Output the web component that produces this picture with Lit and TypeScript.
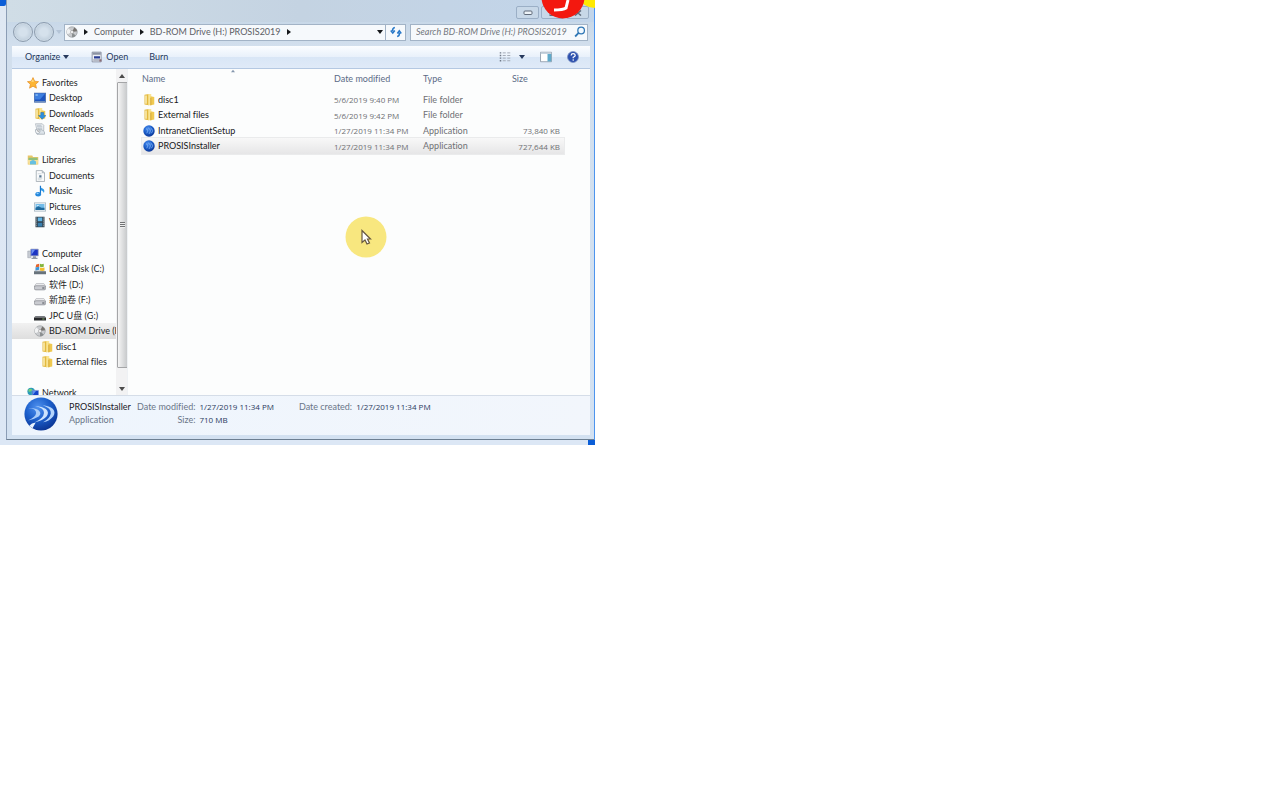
import { LitElement, html, css, svg, nothing } from "lit";
import { customElement, property, state } from "lit/decorators.js";

const folder = svg`<path d="M2 1l6-1v15l-6-1z" fill="#e3b93f"/><path d="M7 0h4v15H7z" fill="#f9e493"/><path d="M10 3l5 1v10l-5 1z" fill="#efc950"/><path d="M10 5h1v10h-1z" fill="#c99a2a"/><path d="M3 2h2v11H3z" fill="#fbefb9"/>`;
const drive = svg`<path d="M3 6h10l3 4H0z" fill="#e9eaec" stroke="#a3a5aa" stroke-width=".7"/><rect x=".5" y="9" width="15" height="5.5" rx="2" fill="#c9cbd0" stroke="#777b82" stroke-width=".8"/><path d="M11 12h3" stroke="#4b4f55" stroke-width="1.3"/>`;
const disc = svg`<circle cx="8" cy="8" r="7" fill="#c9cbce" stroke="#8f9397" stroke-width=".8"/><path d="M8 8L3 3a7 7 0 0 0-1 8z" fill="#f1f2f3"/><path d="M8 8l3-6a7 7 0 0 1 4 5z" fill="#77736f"/><path d="M8 8l5 5a7 7 0 0 1-5 2z" fill="#8b8f90"/><circle cx="8" cy="8" r="2" fill="#fff" stroke="#888" stroke-width=".7"/>`;
const ball = svg`<defs><radialGradient id="b" cx=".4" cy=".3" r=".75"><stop offset="0" stop-color="#4f91ee"/><stop offset=".5" stop-color="#1c5fcb"/><stop offset="1" stop-color="#0a3290"/></radialGradient></defs>`;

const icons: Record<string, unknown> = {
  star: svg`<path d="M8 .8l2.2 4.8 5.2.6-3.9 3.5 1.1 5.2L8 12.3l-4.6 2.6 1.1-5.2L.6 6.2l5.2-.6z" fill="#fdb634" stroke="#e48a1e" stroke-width=".9"/><path d="M8 3l1.3 3.4H5.5z" fill="#ffdf83"/>`,
  desktop: svg`<rect x=".5" y="1.5" width="15" height="12" fill="#1d55c0" stroke="#4c6fa8"/><path d="M1 2h14L8 10H1z" fill="#3d7fe0"/><path d="M1 12h14v2H1z" fill="#6f8fc0"/><path d="M2 3h3v2H2z" fill="#8fc0f5"/>`,
  downloads: svg`${folder}<path d="M9 6h4v4h3l-5 5-5-5h3z" fill="#2b8fe0" stroke="#1766b5" stroke-width=".6"/>`,
  recent: svg`<path d="M2 1h9l2 2v7H4z" fill="#edf0f3" stroke="#9ba4ac" stroke-width=".8"/><path d="M4 3h6M4 5h7M5 7h6" stroke="#a8b4bf"/><path d="M2 9h9l3 3v3H4z" fill="#dce3e9" stroke="#8f9aa5" stroke-width=".8"/><circle cx="5" cy="11" r="3" fill="#f7f9fa" stroke="#8e9ba6" stroke-width=".8"/><path d="M5 9v2h2" stroke="#555" stroke-width=".7" fill="none"/>`,
  libraries: svg`<path d="M1 2h6l1 2h7v10H1z" fill="#e9c667"/><path d="M2 5h12v4H2z" fill="#8fc07d"/><path d="M1 8h14l-1 6H2z" fill="#f5e09a"/><path d="M4 10q4-4 8 0v4H4z" fill="#66bfe0"/>`,
  documents: svg`<path d="M3 .8h8l3 3v11.5H3z" fill="#fafbfc" stroke="#8c979f" stroke-width=".9"/><path d="M11 .8v3h3" fill="#ccd4da" stroke="#8c979f" stroke-width=".7"/><path d="M5 5h5M5 11h6M5 13h5" stroke="#b8c3ca" stroke-width=".8"/><path d="M7 7h3v3H7z" fill="#5a7893"/>`,
  music: svg`<path d="M8 1q1 3 4 4 3 2 1 6 0-3-4-4v5" fill="#2e9ae8"/><path d="M8.6 1v11" stroke="#1976cb" stroke-width="1.6"/><ellipse cx="5.6" cy="12.2" rx="3.8" ry="3" fill="#2387dc"/><ellipse cx="4.8" cy="11.4" rx="1.5" ry="1" fill="#93d0fb"/>`,
  pictures: svg`<rect x=".5" y="2.5" width="15" height="11" fill="#f5f9fb" stroke="#9fb0bc"/><path d="M2 4h12v8H2z" fill="#72bbe8"/><path d="M2 9l4-2 4 2 4 0v3H2z" fill="#206a9d"/><path d="M3 5l4 1-2 1z" fill="#e4f6ff"/>`,
  videos: svg`<path d="M2 1h12v14H2z" fill="#32424e"/><path d="M5 2h6v5H5z" fill="#62b5e5"/><path d="M5 9h6v5H5z" fill="#397fae"/><path d="M3.4 2v12M12.6 2v12" stroke="#ccd5da" stroke-dasharray="1.3 1.3"/>`,
  computer: svg`<path d="M1 4h4v9H1z" fill="#c8cdd4" stroke="#8d949e" stroke-width=".6"/><path d="M5 1.5h10v9H5z" fill="#1c35c3" stroke="#a3aabc"/><path d="M6 2h5l-5 7z" fill="#6d91f1"/><path d="M8 11h4v2h2v1.5H6V13h2z" fill="#8f98a6"/>`,
  local: svg`<path d="M1 9h12l3 5H0z" fill="#d7d9dc"/><path d="M0 11h16v4H0z" fill="#68737c"/><path d="M3 2l4-1v4l-5 1z" fill="#e5642b"/><path d="M8 1q2 1 5 0v4q-3 1-5 0z" fill="#83b53c"/><path d="M2 6l5-1v4l-5 1z" fill="#3b96d9"/><path d="M8 6q2 1 6 0v4q-3 1-6 0z" fill="#f3bd2c"/>`,
  drive,
  usb: svg`<path d="M2 8h12l2 2H0z" fill="#777b80"/><path d="M0 10h16v4H0z" fill="#26282b"/><path d="M11 12h3" stroke="#9bd37c"/>`,
  disc,
  folder,
  network: svg`<circle cx="5.5" cy="6" r="5" fill="#2b9bb9"/><path d="M2 3q4-2 5 1-2 3-5 2z" fill="#74cf77"/><path d="M7 4.5h8.5v7.5H7z" fill="#1544c9" stroke="#9cafd8" stroke-width=".8"/><path d="M8 5.3h4l-4 5z" fill="#5b91f3"/><path d="M9 12h5v2H9z" fill="#8896aa"/>`,
  app: svg`${ball}<circle cx="8" cy="8" r="7.6" fill="url(#b)"/><path d="M4 5q4 1 1 6M7 4q5 2 1 8M10 4q5 3 1 7" fill="none" stroke="#91bdf9" stroke-width=".9"/>`,
  appLarge: svg`${ball}<circle cx="8" cy="8" r="7.8" fill="url(#b)"/><path d="M2 5.2q3.9.2 3.7 2.5Q5.4 9.6 1.9 11q3-.5 5-1.8 1.5-1.3.2-2.7Q5.5 5 2 5.2z" fill="#a9cdfa"/><path d="M5.2 4.3q4.4.8 4.2 3.2-.2 2.5-4.3 4.4 3.800-.6 5.600-2.800 1.300-1.900-.4-3.400-1.600-1.300-5.100-1.400z" fill="#cde3fd"/><path d="M8.800 3.900q4.100 1.400 3.800 3.900-.4 2.400-3.600 4.100 3.100-.7 4.800-2.900 1.200-2-.3-3.500-1.500-1.300-4.700-1.600z" fill="#b4d4fc"/><path d="M2.500 13.500q1-1.300 3-1.500L4 14.700z" fill="#e9f4ff"/>`,
  open: svg`<path d="M1.500 1.500h12v13h-12z" fill="#eceff5" stroke="#777f91"/><path d="M2 2h11v3H2z" fill="#8b92a2"/><path d="M4 7h8v3H4z" fill="#283c93"/><path d="M3 12h8" stroke="#8b92a2" stroke-width="1.5"/><path d="M11 11h3v3h-3z" fill="#8a6b74"/>`,
  refresh: svg`<path d="M6.500 2Q3 2.500 3.500 7M1 6l2.700 3.500L6.400 6M9.500 14q3.500-.5 3-5M9.800 10l2.600-3.500L15 10" fill="none" stroke="#2878c8" stroke-width="2"/>`,
  search: svg`<circle cx="9.500" cy="6" r="4.400" fill="#f2f9ff" stroke="#2f77b5" stroke-width="1.700"/><path d="M6.200 9.300L1.500 14" stroke="#2f77b5" stroke-width="2.400"/>`,
  views: svg`<path d="M1 2.500h2M1 6h2M1 9.500h2M1 13h2" stroke="#6f7988" stroke-width="1.800"/><path d="M5 2.500h4M5 6h4M5 9.500h4M5 13h4M11 2.500h4M11 6h4M11 9.500h4M11 13h4" stroke="#a3abb7" stroke-width="1.300"/>`,
  preview: svg`<path d="M.7 1.700h14.600v12.600H.7z" fill="#fff" stroke="#7f8d9e"/><path d="M1 2h14v2H1z" fill="#c6d3df"/><path d="M10 4h5v10h-5z" fill="#5faacb"/>`,
  help: svg`<circle cx="8" cy="8" r="7.300" fill="#2c50ae" stroke="#7a8fc2"/><path d="M5.500 6q.2-2.500 2.700-2.500T11 5.800Q11 7.300 8.300 8.300v1.500" fill="none" stroke="#fff" stroke-width="1.700"/><circle cx="8.300" cy="12" r="1.100" fill="#fff"/>`,
};

const icon = (name: string, cls = "icon") =>
  html`<svg class=${cls} viewBox="0 0 16 16" aria-hidden="true">${icons[name]}</svg>`;

const caret = (dir: "down" | "right" | "up", cls = "caret") => {
  const d = { down: "M0 1h6L3 5z", right: "M1 0l4 3-4 3z", up: "M0 5h6L3 1z" }[dir];
  return html`<svg class=${cls} viewBox="0 0 6 6" aria-hidden="true"><path d=${d} fill="currentColor" /></svg>`;
};

interface Place { label?: string; icon?: string; level?: number }

const places: Place[] = [
  { label: "Favorites", icon: "star", level: 0 },
  { label: "Desktop", icon: "desktop", level: 1 },
  { label: "Downloads", icon: "downloads", level: 1 },
  { label: "Recent Places", icon: "recent", level: 1 },
  {},
  { label: "Libraries", icon: "libraries", level: 0 },
  { label: "Documents", icon: "documents", level: 1 },
  { label: "Music", icon: "music", level: 1 },
  { label: "Pictures", icon: "pictures", level: 1 },
  { label: "Videos", icon: "videos", level: 1 },
  {},
  { label: "Computer", icon: "computer", level: 0 },
  { label: "Local Disk (C:)", icon: "local", level: 1 },
  { label: "软件 (D:)", icon: "drive", level: 1 },
  { label: "新加卷 (F:)", icon: "drive", level: 1 },
  { label: "JPC U盘 (G:)", icon: "usb", level: 1 },
  { label: "BD-ROM Drive (H:) PROSIS2019", icon: "disc", level: 1 },
  { label: "disc1", icon: "folder", level: 2 },
  { label: "External files", icon: "folder", level: 2 },
  {},
  { label: "Network", icon: "network", level: 0 },
];

const files = [
  { name: "disc1", icon: "folder", date: "5/6/2019 9:40 PM", type: "File folder", size: "" },
  { name: "External files", icon: "folder", date: "5/6/2019 9:42 PM", type: "File folder", size: "" },
  { name: "IntranetClientSetup", icon: "app", date: "1/27/2019 11:34 PM", type: "Application", size: "73,840 KB" },
  { name: "PROSISInstaller", icon: "app", date: "1/27/2019 11:34 PM", type: "Application", size: "727,644 KB" },
];

const shared = css`
  :host { display: block; font-variant-ligatures: none; }
  * { box-sizing: border-box; }
  button { font: inherit; color: inherit; background: none; border: 0; padding: 0; margin: 0; white-space: nowrap; }
  .icon { width: 12px; height: 12px; flex: none; display: block; }
  .caret { width: 6px; height: 6px; flex: none; display: block; }
`;

@customElement("explorer-toolbar")
class ExplorerToolbar extends LitElement {
  static styles = [shared, css`
    .bar {
      display: flex; align-items: center; height: 23px; padding: 0 11px 0 13px; color: #26395c;
      background: linear-gradient(#fbfdff, #e9f1fb 48%, #d9e6f6 52%, #dfeaf8);
      border-bottom: 1px solid #b4c8e2;
    }
    button { display: flex; align-items: center; gap: 3px; }
    .open { margin-left: 22px; }
    .burn { margin-left: 21px; }
    .end { display: flex; align-items: center; gap: 15px; margin-left: auto; }
    .views { gap: 8px; }
  `];

  render() {
    return html`<div class="bar" role="toolbar" aria-label="Commands">
      <button>Organize ${caret("down")}</button>
      <button class="open">${icon("open")}Open</button>
      <button class="burn">Burn</button>
      <div class="end">
        <button class="views" aria-label="Change view">${icon("views")}${caret("down")}</button>
        <button aria-label="Preview pane">${icon("preview")}</button>
        <button aria-label="Help">${icon("help")}</button>
      </div>
    </div>`;
  }
}

@customElement("places-pane")
class PlacesPane extends LitElement {
  @property() current = "";

  static styles = [shared, css`
    :host { display: flex; min-height: 0; overflow: hidden; }
    .list {
      flex: 1; min-width: 0; height: 326px; margin: 6px 0 0; padding: 0; list-style: none;
      display: grid; grid-auto-rows: 1fr; color: #1d1d1f;
    }
    li { display: flex; overflow: hidden; }
    .place { display: flex; align-items: center; gap: 3px; flex: 1; padding-left: 15px; text-align: left; }
    .level1 { padding-left: 22px; }
    .level2 { padding-left: 29px; }
    .current { background: linear-gradient(#f1f1f1, #dedede); }
    .track { width: 12px; flex: none; display: flex; flex-direction: column; align-items: center; padding: 4px 0 3px; background: #f2f2f3; color: #4b4b4b; }
    .thumb {
      width: 11px; height: 286px; margin: 3px 0 auto; border: 1px solid #a4a5a7; border-radius: 1px;
      background: linear-gradient(90deg, #f5f5f5, #dedfe0 50%, #c7c9cb);
      display: flex; align-items: center; justify-content: center;
    }
    .grip { width: 5px; height: 6px; background: repeating-linear-gradient(#707274 0 1px, #eee 1px 2px); }
  `];

  render() {
    return html`<ul class="list">
        ${places.map((p) => p.label
          ? html`<li class=${p.icon === this.current ? "current" : ""}>
              <button class="place level${p.level}">${icon(p.icon!)}<span>${p.label}</span></button>
            </li>`
          : html`<li aria-hidden="true"></li>`)}
      </ul>
      <div class="track" aria-hidden="true">
        ${caret("up")}
        <div class="thumb"><div class="grip"></div></div>
        ${caret("down")}
      </div>`;
  }
}

@customElement("file-list")
class FileList extends LitElement {
  @state() private selected = "PROSISInstaller";

  static styles = [shared, css`
    :host { padding: 0 26px 0 14px; position: relative; }
    table { width: 100%; border-collapse: collapse; table-layout: fixed; text-align: left; }
    th, td { padding: 0; font-weight: normal; white-space: nowrap; }
    th { height: 23px; padding-bottom: 4px; color: #5b6b86; }
    th:last-child { padding-left: 4px; }
    td { height: 15px; color: #6f7074; }
    tr:nth-child(even) td { height: 16px; }
    .date { width: 89px; }
    .type { width: 85px; }
    .size { width: 56px; }
    .num { font: 8px "Open Sans", sans-serif; }
    .right { text-align: right; padding-right: 4px; }
    .name { display: flex; align-items: center; gap: 3px; padding-left: 1px; color: #17181a; }
    .selected { background: linear-gradient(#f8f8f8, #e6e6e7); box-shadow: 0 0 0 1px #eaebec; }
    .sort { position: absolute; left: 102px; top: 0; width: 6px; height: 4px; color: #8496ad; }
  `];

  render() {
    return html`${caret("up", "sort")}
      <table>
        <thead>
          <tr>
            <th scope="col">Name</th>
            <th scope="col" class="date">Date modified</th>
            <th scope="col" class="type">Type</th>
            <th scope="col" class="size">Size</th>
          </tr>
        </thead>
        <tbody>
          ${files.map((f) => html`<tr class=${f.name === this.selected ? "selected" : ""} @click=${() => (this.selected = f.name)}>
            <td><button class="name">${icon(f.icon)}${f.name}</button></td>
            <td class="num">${f.date}</td>
            <td>${f.type}</td>
            <td class="num right">${f.size || nothing}</td>
          </tr>`)}
        </tbody>
      </table>`;
  }
}

@customElement("details-pane")
class DetailsPane extends LitElement {
  static styles = [shared, css`
    .pane {
      display: flex; gap: 11px; height: 40px; padding: 1px 12px; color: #2a3a5d;
      background: linear-gradient(90deg, #eef5fd, #f2f6fc); border-top: 1px solid #d5dde8;
    }
    .large { width: 34px; height: 34px; flex: none; }
    .facts { display: grid; grid-template-columns: 64px auto auto auto auto; grid-auto-rows: 13px; column-gap: 4px; align-items: center; align-content: start; margin: 3px 0 0; white-space: nowrap; }
    dt, dd { margin: 0; }
    dt { color: #6a7588; text-align: right; }
    .title { color: #1c2028; }
    .kind { color: #6a7588; }
    .num { font: 8px "Open Sans", sans-serif; }
    .created { padding-left: 21px; }
  `];

  render() {
    return html`<div class="pane">
      ${icon("appLarge", "large")}
      <dl class="facts">
        <dd class="title">PROSISInstaller</dd>
        <dt>Date modified:</dt><dd class="num">1/27/2019 11:34 PM</dd>
        <dt class="created">Date created:</dt><dd class="num">1/27/2019 11:34 PM</dd>
        <dd class="kind">Application</dd>
        <dt>Size:</dt><dd class="num">710 MB</dd>
      </dl>
    </div>`;
  }
}

@customElement("app-root")
class AppRoot extends LitElement {
  static styles = [shared, css`
    :host { font: 9px/12px Lato, "Noto Sans CJK SC", sans-serif; background: #fff; }
    .desktop { position: relative; width: 100%; max-width: 595px; overflow: hidden; padding: 0 1px 5px 6px; background: linear-gradient(#dfe8f3, #dce7f5); }
    .corner { position: absolute; background: #0b5ed7; }
    .tl { left: 0; top: 0; width: 6px; height: 6px; border-bottom-right-radius: 2px; }
    .br { right: 0; bottom: 0; width: 7px; height: 5px; }
    .edge { position: absolute; right: 0; top: 0; bottom: 0; width: 1px; background: #4c94ee; }
    .window {
      padding: 0 4px 4px 5px; border-left: 1px solid #8b9db5; border-bottom: 1px solid #6d7f92;
      background: linear-gradient(#c0d2e4, #d2dfed 46px, #d3e1f1);
    }
    .title { display: flex; justify-content: flex-end; gap: 2px; height: 22px; padding: 6px 5px 0; background: linear-gradient(90deg, #d0dde6, #c4d3e2 50%, #c2d5ea); margin: 0 -4px 0 -5px; }
    .control { width: 23px; height: 13px; border: 1px solid #9bafc6; border-radius: 2px; display: flex; align-items: center; justify-content: center; background: #c8d8e8; }
    .control svg { width: 10px; height: 6px; }
    .nav { display: flex; align-items: center; height: 24px; padding: 0 2px 4px 1px; color: #5d6066; }
    .round { width: 20px; height: 20px; flex: none; border: 1px solid #8c9cae; border-radius: 50%; background: radial-gradient(#d5e1ec 30%, #c5d3e0 60%, #eef3f8); margin-right: 1px; }
    .recent { color: #b4c4d7; margin: 0 2px 0 1px; }
    .field { display: flex; align-items: center; height: 17px; border: 1px solid #a2b3c6; background: #f6f9fc; }
    .address { flex: 1; min-width: 0; padding: 0 2px 0 1px; gap: 5px; }
    .address button { overflow: hidden; }
    .address .caret { color: #16181b; }
    .drop { margin-left: auto; }
    .refresh { width: 20px; justify-content: center; border-left: 0; }
    .search { width: 178px; margin-left: 4px; padding: 0 1px 0 5px; }
    input { flex: 1; min-width: 0; border: 0; padding: 0; outline: 0; background: none; font: inherit; font-style: italic; color: #333; }
    input::placeholder { color: #74787e; opacity: 1; }
    .body { display: grid; grid-template-columns: 116px 1fr; height: 326px; background: #fcfdfd; }
    file-list { border-left: 1px solid #eef1f4; margin-left: -1px; }
    .logo { position: absolute; right: 0; top: 0; width: 55px; height: 20px; }
    .pointer { position: absolute; left: 345px; top: 216px; width: 42px; height: 42px; }
  `];

  render() {
    return html`<main class="desktop">
      <div class="corner tl"></div>
      <section class="window" aria-label="PROSIS2019">
        <div class="title">
          <button class="control" aria-label="Minimize"><svg viewBox="0 0 10 6"><rect x="1" y="1" width="8" height="3.500" rx="1" fill="#edf3f8" stroke="#606b7a" /></svg></button>
          <button class="control" aria-label="Maximize"><svg viewBox="0 0 10 6"><rect x="2" y=".5" width="6" height="5" fill="#edf3f8" stroke="#606b7a" /></svg></button>
          <button class="control" aria-label="Close"><svg viewBox="0 0 10 6"><path d="M2 .5l6 5M8 .5l-6 5" stroke="#606b7a" stroke-width="1.500" /></svg></button>
        </div>
        <div class="nav">
          <button class="round" aria-label="Back"></button>
          <button class="round" aria-label="Forward"></button>
          <span class="recent">${caret("down")}</span>
          <nav class="field address" aria-label="Address">
            ${icon("disc")}${caret("right")}
            <button>Computer</button>${caret("right")}
            <button>BD-ROM Drive (H:) PROSIS2019</button>${caret("right")}
            <button class="drop" aria-label="Previous locations">${caret("down")}</button>
          </nav>
          <button class="field refresh" aria-label="Refresh">${icon("refresh")}</button>
          <label class="field search">
            <input type="text" aria-label="Search" placeholder="Search BD-ROM Drive (H:) PROSIS2019" />
            ${icon("search")}
          </label>
        </div>
        <explorer-toolbar></explorer-toolbar>
        <div class="body">
          <places-pane current="disc"></places-pane>
          <file-list></file-list>
        </div>
        <details-pane></details-pane>
      </section>
      <div class="edge"></div>
      <div class="corner br"></div>
      <svg class="logo" viewBox="0 0 55 20" aria-hidden="true">
        <path d="M38 0h17v8Q45 7 38 0z" fill="#ffe900" />
        <circle cx="23" cy="-3" r="21.500" fill="#f3180f" />
        <path d="M28 0l-2 8q-3 2-12 2" fill="none" stroke="#fff" stroke-width="3" />
      </svg>
      <svg class="pointer" viewBox="0 0 42 42" aria-hidden="true">
        <circle cx="21" cy="21" r="20.500" fill="#f8e77f" />
        <path d="M17 14.500v12l3-2.500 2 4 2.500-1-2-4h3z" fill="#fff" stroke="#67583e" stroke-width="1.200" />
      </svg>
    </main>`;
  }
}
